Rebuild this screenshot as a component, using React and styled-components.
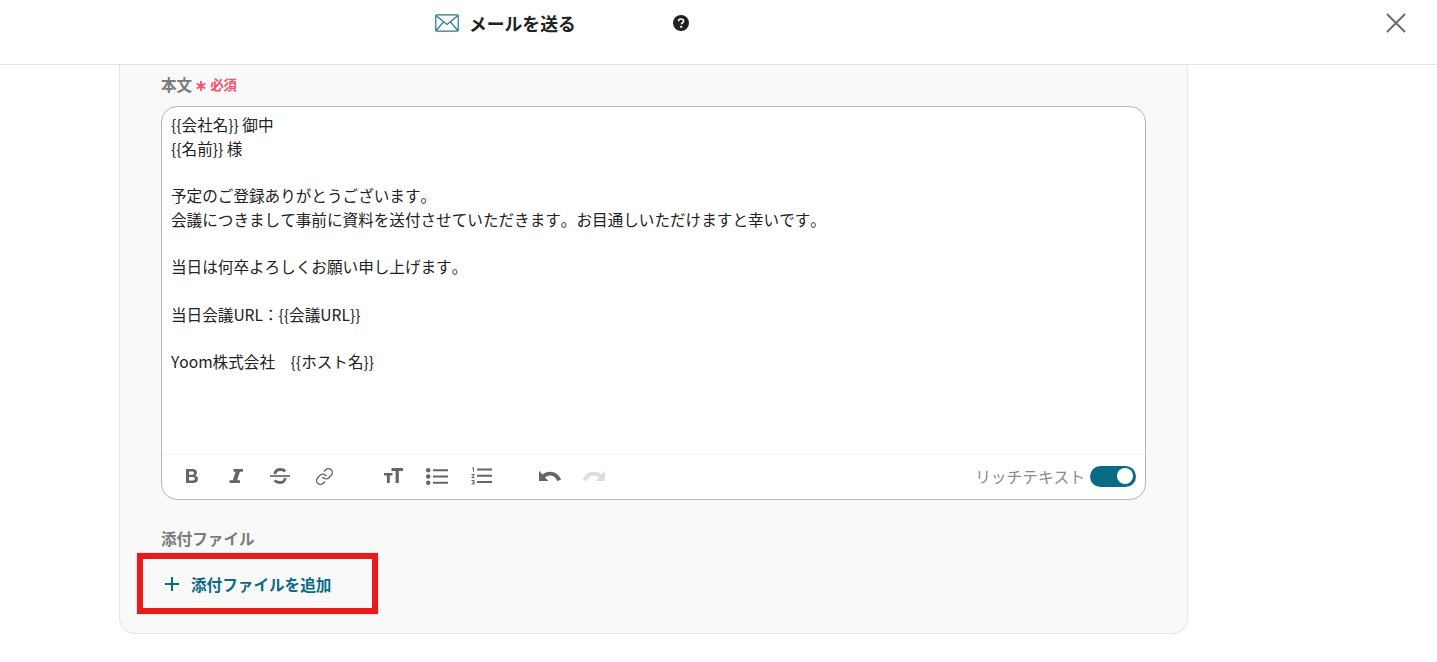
import React from 'react';
import styled, { createGlobalStyle } from 'styled-components';
import { Link } from 'lucide-react';

const GlobalStyle = createGlobalStyle`
  html, body {
    margin: 0;
    height: 100%;
    background: #fff;
    overflow: hidden;
    font-family: "Noto Sans CJK JP", "Noto Sans", sans-serif;
    font-kerning: none;
  }
  * {
    box-sizing: border-box;
  }
`;

const Page = styled.div`
  width: 1437px;
  height: 662px;
`;

const Header = styled.header`
  height: 65px;
  padding: 0 20px 19px 435px;
  display: flex;
  align-items: center;
  border-bottom: 1px solid #e3e3e3;
`;

const Title = styled.h1`
  margin: 0 0 0 10px;
  width: 204px;
  font-size: 17.8px;
  font-weight: 700;
  line-height: 24px;
  color: #222;
`;

const CloseButton = styled.button`
  margin-left: auto;
  margin-right: 10px;
  padding: 0;
  width: 22px;
  height: 22px;
  border: 0;
  background: none;
  display: flex;
  color: #6e6e6e;
`;

const Panel = styled.section`
  margin-left: 119px;
  width: 1069px;
  height: 569px;
  padding: 7px 41px 0;
  background: #f9f9f9;
  border: 1px solid #e6e6e6;
  border-top: 0;
  border-radius: 0 0 16px 16px;
`;

const FieldLabel = styled.div`
  display: flex;
  align-items: center;
  height: 24px;
  font-size: 15.6px;
  font-weight: 700;
  color: #7b7b7b;
`;

const RequiredMark = styled.span`
  margin-left: 4px;
  font-size: 13.4px;
  font-weight: 700;
  color: #ff4d6d;
`;

const StarMark = styled.svg`
  margin: 4px 0 0 4px;
`;

const Editor = styled.div`
  margin-top: 10px;
  width: 985px;
  height: 394px;
  background: #fff;
  border: 1px solid #b6b6b6;
  border-radius: 16px;
  display: flex;
  flex-direction: column;
`;

const Body = styled.div`
  flex: 1;
  padding: 6px 9px;
  font-size: 15.6px;
  line-height: 23.7px;
  color: #222;
  white-space: pre-wrap;
`;

const Toolbar = styled.div`
  height: 45px;
  padding: 0 9px 2px 8px;
  display: flex;
  align-items: center;
  border-top: 1px solid #f1f1f1;
`;

const ToolGroup = styled.div`
  display: flex;
  margin-right: 25px;
`;

const ToolButton = styled.button`
  width: 44px;
  height: 44px;
  padding: 0;
  border: 0;
  background: none;
  display: flex;
  align-items: center;
  justify-content: center;
  color: ${({ $disabled }) => ($disabled ? '#dedede' : '#666')};
`;

const RichLabel = styled.span`
  margin-left: auto;
  font-size: 15.7px;
  color: #8a8a8a;
`;

const Toggle = styled.span`
  margin-left: 5px;
  width: 46px;
  height: 21px;
  padding-right: 3px;
  border-radius: 11px;
  background: #0a6b85;
  display: flex;
  align-items: center;
  justify-content: flex-end;
`;

const Knob = styled.span`
  width: 16px;
  height: 16px;
  border-radius: 50%;
  background: #fff;
`;

const AttachLabel = styled(FieldLabel)`
  margin-top: 26px;
`;

const AddButton = styled.button`
  margin: 3px 0 0 -24px;
  width: 241px;
  height: 61px;
  padding: 0 0 0 22px;
  display: flex;
  align-items: center;
  gap: 12px;
  background: none;
  border: 6px solid #e61c1c;
  box-shadow: 0 0 0 1px #f6e4e4;
  font-family: inherit;
  font-size: 15.6px;
  font-weight: 700;
  color: #0a6b85;
`;

const MailIcon = () => (
  <svg width="24" height="18" viewBox="0 0 24 18" fill="none" stroke="#1d7a94" strokeWidth="1.2">
    <rect x="0.8" y="0.8" width="22.4" height="16.4" rx="1" />
    <path d="M1 1.5 12 10.5 23 1.5M1 16.5 8.6 7.8M23 16.5 15.4 7.8" />
  </svg>
);

const HelpIcon = () => (
  <svg width="16" height="16" viewBox="0 0 16 16">
    <circle cx="8" cy="8" r="8" fill="#222" />
    <path d="M5.5 6.2C5.6 4.7 6.6 4 8 4c1.5 0 2.5.8 2.5 2 0 1-.6 1.5-1.3 2-.6.4-.8.7-.8 1.3" fill="none" stroke="#fff" strokeWidth="1.7" />
    <circle cx="8.2" cy="11.9" r="1.1" fill="#fff" />
  </svg>
);

const CloseIcon = () => (
  <svg width="22" height="22" viewBox="0 0 22 22" stroke="currentColor" strokeWidth="2.1">
    <path d="M2 2 20 20M20 2 2 20" />
  </svg>
);

const Star = () => (
  <StarMark width="10" height="10" viewBox="0 0 10 10" stroke="#ff4d6d" strokeWidth="1.8">
    <path d="M5 0v10M.7 2.5l8.6 5M9.3 2.5l-8.6 5" />
  </StarMark>
);

const BoldIcon = () => (
  <svg width="12" height="14" viewBox="0 0 12 14" fill="currentColor">
    <path fillRule="evenodd" d="M0 0h6.6C9.3 0 11 1.4 11 3.6c0 1.3-.7 2.4-1.8 2.9 1.7.5 2.8 1.8 2.8 3.4C12 12.4 10.100 14 7.100 14H0zM3 2.500v3.200h3.200c1.100 0 1.800-.6 1.800-1.600s-.7-1.600-1.800-1.600zM3 8.100v3.400h3.700c1.300 0 2.100-.7 2.100-1.700s-.8-1.700-2.100-1.700z" />
  </svg>
);

const ItalicIcon = () => (
  <svg width="14" height="14" viewBox="0 0 14 14" fill="currentColor">
    <path d="M4.500 0H14v2.800h-3.100L8.100 11.200H11V14H.5v-2.800h3.300L6.600 2.800H4.500z" />
  </svg>
);

const StrikeIcon = () => (
  <svg width="20" height="16" viewBox="0 0 20 16" fill="none" stroke="currentColor">
    <path d="M0 8h20" strokeWidth="1.700" />
    <path d="M5.200 6.200C4.800 3 7.400 1.500 10.200 1.500c2.300 0 4 .7 5 1.900M15 10c.4 2.800-2 4.500-5 4.500-2.500 0-4.200-.7-5.400-2.100" strokeWidth="2.800" />
  </svg>
);

const TextSizeIcon = () => (
  <svg width="19" height="16" viewBox="0 0 19 16" fill="currentColor">
    <path d="M0 5h8.500v2.600H5.800V15H2.900V7.600H0zM7.500 0H19v3h-4.200v12h-3.200V3H7.500z" />
  </svg>
);

const BulletListIcon = () => (
  <svg width="22" height="17" viewBox="0 0 22 17" fill="currentColor">
    <circle cx="2.200" cy="2.200" r="2.200" />
    <circle cx="2.200" cy="8.500" r="2.200" />
    <circle cx="2.200" cy="14.800" r="2.200" />
    <path d="M7 1.200h15v2H7zM7 7.500h15v2H7zM7 13.800h15v2H7z" />
  </svg>
);

const NumberListIcon = () => (
  <svg width="21" height="18" viewBox="0 0 21 18" fill="currentColor">
    <path d="M1 .500h2v4.500H2V1.500H1zM.5 7h3v1L1.800 10h1.700v1H.5v-1l1.800-2H.5zM.5 13h3v4.500h-3v-1h2v-.8H1.200v-.9h1.300V14h-2z" />
    <path d="M6 1.500h15v2H6zM6 7.800h15v2H6zM6 14.100h15v2H6z" />
  </svg>
);

const UndoIcon = () => (
  <svg width="22" height="14" viewBox="0 0 22 14" fill="currentColor">
    <path d="M0 2v10h9.500L6 8.500C7.400 7.200 9.100 6.500 11 6.500c3.300 0 6 2.200 7.100 5.500l3.900-1.200C20.500 5.900 16.200 2.800 11 2.800 8.200 2.800 5.700 3.800 3.700 5.600z" />
  </svg>
);

const RedoIcon = () => (
  <svg width="22" height="14" viewBox="0 0 22 14" fill="currentColor">
    <path d="M22 2v10h-9.500L16 8.500C14.600 7.200 12.900 6.500 11 6.500c-3.300 0-6 2.200-7.100 5.500L0 10.800C1.500 5.900 5.800 2.800 11 2.800c2.800 0 5.300 1 7.300 2.800z" />
  </svg>
);

const PlusIcon = () => (
  <svg width="14" height="14" viewBox="0 0 14 14" stroke="#0a6b85" strokeWidth="2">
    <path d="M7 0v14M0 7h14" />
  </svg>
);

const mailBody = `{{会社名}} 御中
{{名前}} 様

予定のご登録ありがとうございます。
会議につきまして事前に資料を送付させていただきます。お目通しいただけますと幸いです。

当日は何卒よろしくお願い申し上げます。

当日会議URL：{{会議URL}}

Yoom株式会社　{{ホスト名}}`;

const App = () => (
  <Page>
    <GlobalStyle />
    <Header>
      <MailIcon />
      <Title>メールを送る</Title>
      <HelpIcon />
      <CloseButton aria-label="close">
        <CloseIcon />
      </CloseButton>
    </Header>
    <Panel>
      <FieldLabel>
        本文
        <Star />
        <RequiredMark>必須</RequiredMark>
      </FieldLabel>
      <Editor>
        <Body>{mailBody}</Body>
        <Toolbar>
          <ToolGroup>
            <ToolButton><BoldIcon /></ToolButton>
            <ToolButton><ItalicIcon /></ToolButton>
            <ToolButton><StrikeIcon /></ToolButton>
            <ToolButton><Link size={19} strokeWidth={1.8} /></ToolButton>
          </ToolGroup>
          <ToolGroup>
            <ToolButton><TextSizeIcon /></ToolButton>
            <ToolButton><BulletListIcon /></ToolButton>
            <ToolButton><NumberListIcon /></ToolButton>
          </ToolGroup>
          <ToolGroup>
            <ToolButton><UndoIcon /></ToolButton>
            <ToolButton $disabled><RedoIcon /></ToolButton>
          </ToolGroup>
          <RichLabel>リッチテキスト</RichLabel>
          <Toggle><Knob /></Toggle>
        </Toolbar>
      </Editor>
      <AttachLabel>添付ファイル</AttachLabel>
      <AddButton>
        <PlusIcon />
        添付ファイルを追加
      </AddButton>
    </Panel>
  </Page>
);

export default App;
